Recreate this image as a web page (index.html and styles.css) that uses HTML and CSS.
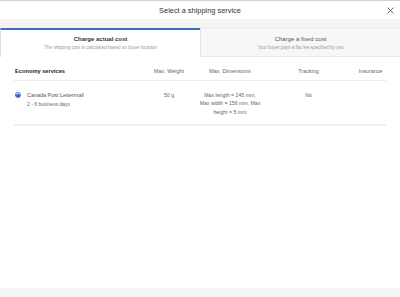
FILE: index.html
```html
<!DOCTYPE html>
<html lang="en">
<head>
<meta charset="utf-8">
<title>Select a shipping service</title>
<link rel="stylesheet" href="styles.css">
</head>
<body>
<div class="modal">
  <div class="header">
    <span></span>
    <h1 class="title">Select a shipping service</h1>
    <button class="close" aria-label="Close">
      <svg width="7" height="7" viewBox="0 0 7 7"><path d="M0.5 0.5L6.5 6.5M6.5 0.5L0.5 6.5" stroke="#555" stroke-width="0.9" fill="none"/></svg>
    </button>
  </div>
  <div class="tabs">
    <div class="tab active">
      <div class="tab-title">Charge actual cost</div>
      <div class="tab-sub">The shipping cost is calculated based on buyer location</div>
    </div>
    <div class="tab">
      <div class="tab-title">Charge a fixed cost</div>
      <div class="tab-sub">Your buyer pays a flat fee specified by you</div>
    </div>
  </div>
  <div class="content">
    <div class="table">
      <div class="row head">
        <div class="cell name-h">Economy services</div>
        <div class="cell c">Max. Weight</div>
        <div class="cell c dims">Max. Dimensions</div>
        <div class="cell c">Tracking</div>
        <div class="cell c ins">Insurance</div>
      </div>
      <div class="row body">
        <div class="cell svc">
          <span class="radio"><span class="dot"></span></span>
          <div class="svc-text">
            <div class="svc-name">Canada Post Lettermail</div>
            <div class="svc-sub">2 - 6 business days</div>
          </div>
        </div>
        <div class="cell c">50 g</div>
        <div class="cell c dims">Max length = 245 mm, Max width = 156 mm, Max height = 5 mm</div>
        <div class="cell c">No</div>
        <div class="cell c ins"></div>
      </div>
    </div>
  </div>
  <div class="footer"></div>
</div>
</body>
</html>
```
FILE: styles.css
```css
* { box-sizing: border-box; }
html, body { margin: 0; padding: 0; }
body {
  width: 400px;
  height: 297px;
  font-family: "Liberation Sans", Arial, sans-serif;
  background: #fff;
  color: #333;
}
.modal {
  height: 297px;
  display: flex;
  flex-direction: column;
  border-top: 1px solid #d4d4d4;
}
.header {
  height: 18px;
  display: grid;
  grid-template-columns: 1fr auto 1fr;
  align-items: center;
  background: #fff;
}
.title {
  margin: 0;
  font-size: 7.4px;
  font-weight: normal;
  color: #333;
  line-height: 9px;
  padding-top: 1px;
}
.close {
  justify-self: end;
  margin-right: 6px;
  padding: 0;
  border: 0;
  background: none;
  width: 7px;
  height: 7px;
  display: flex;
  margin-top: 1px;
}
.tabs {
  display: flex;
  background: #f5f4f2;
  padding-top: 9px;
}
.tab {
  flex: 1;
  text-align: center;
  height: 29px;
  padding-top: 7px;
  background: #f7f7f7;
  border-top: 1px solid #ebebeb;
  border-left: 1px solid #e2e2e2;
  border-bottom: 1px solid #e8e8e8;
}
.tab.active {
  background: #fff;
  border-top: 2px solid #3b6cc8;
  border-left: 1px solid #e0e0e0;
  border-bottom: 0;
  padding-top: 6px;
}
.tab-title {
  font-size: 6px;
  line-height: 7px;
  color: #555;
}
.tab.active .tab-title {
  font-weight: bold;
  color: #333;
}
.tab-sub {
  margin-top: 1.5px;
  font-size: 4.6px;
  line-height: 6px;
  color: #9a9a9a;
}
.content {
  flex: 1;
  padding: 11px 14px 0;
}
.row {
  display: grid;
  grid-template-columns: 137px 36px 86px 71px 42px;
}
.cell {
  font-size: 5.2px;
  line-height: 8.3px;
  color: #666;
}
.c { text-align: center; }
.dims { padding: 0 12px; }
.ins { padding-left: 11px; }
.head {
  padding-bottom: 5px;
  border-bottom: 1px solid #ececec;
  align-items: center;
}
.head .cell {
  font-size: 5.4px;
  line-height: 7px;
  color: #666;
}
.head .name-h {
  font-size: 5.7px;
  font-weight: bold;
  color: #222;
  padding-left: 1px;
}
.body {
  padding-top: 10px;
  padding-bottom: 8px;
  border-bottom: 2px solid #efefef;
}
.svc {
  display: flex;
  gap: 6px;
  padding-left: 1px;
}
.radio {
  width: 6px;
  height: 6px;
  margin-top: 1.3px;
  border: 0.8px solid #3b6cc8;
  border-radius: 50%;
  display: flex;
  align-items: center;
  justify-content: center;
  flex: none;
}
.dot {
  width: 3.4px;
  height: 3.4px;
  border-radius: 50%;
  background: #2f5fc4;
}
.svc-name {
  font-size: 5.45px;
  line-height: 8.3px;
  color: #555;
}
.svc-sub {
  margin-top: 2px;
  font-size: 5px;
  line-height: 7px;
  color: #666;
}
.footer {
  height: 9px;
  background: #f5f4f2;
}
```
